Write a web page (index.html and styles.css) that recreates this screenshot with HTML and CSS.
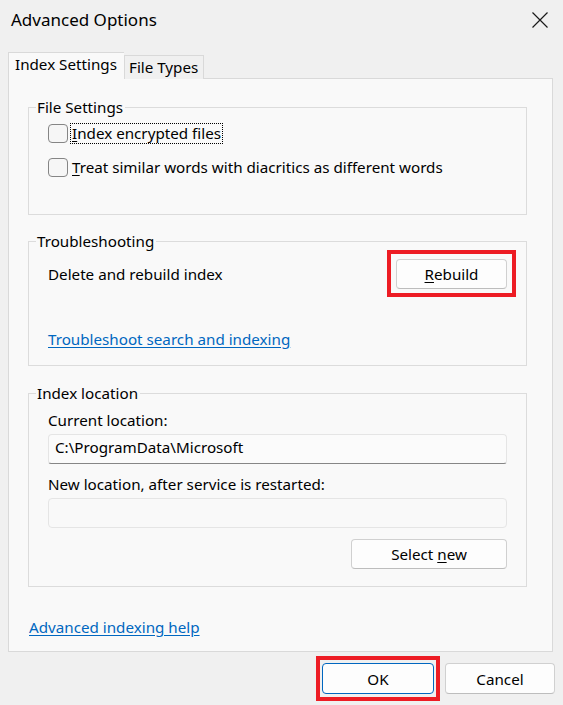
FILE: index.html
```html
<!DOCTYPE html>
<html lang="en">
<head>
<meta charset="utf-8">
<title>Advanced Options</title>
<link rel="stylesheet" href="styles.css">
</head>
<body>
<div class="window">
  <header class="titlebar">
    <span class="title">Advanced Options</span>
    <span class="close" aria-label="Close">
      <svg width="16" height="16" viewBox="0 0 16 16"><path d="M0.5 0.5 L15.5 15.5 M15.5 0.5 L0.5 15.5" stroke="#1a1a1a" stroke-width="1.2" fill="none"/></svg>
    </span>
  </header>

  <nav class="tabs">
    <div class="tab active">Index Settings</div>
    <div class="tab">File Types</div>
  </nav>

  <main class="panel">
    <fieldset class="group group-files">
      <legend>File Settings</legend>
      <label class="check">
        <span class="box"></span>
        <span class="focus"><u>I</u>ndex encrypted files</span>
      </label>
      <label class="check">
        <span class="box"></span>
        <span><u>T</u>reat similar words with diacritics as different words</span>
      </label>
    </fieldset>

    <fieldset class="group group-trouble">
      <legend>Troubleshooting</legend>
      <div class="row">
        <span>Delete and rebuild index</span>
        <span class="btn rebuild marked"><span><u>R</u>ebuild</span></span>
      </div>
      <a class="link trouble-link" href="#">Troubleshoot search and indexing</a>
    </fieldset>

    <fieldset class="group group-location">
      <legend>Index location</legend>
      <div class="field-label">Current location:</div>
      <div class="input current">C:\ProgramData\Microsoft</div>
      <div class="field-label new-label">New location, after service is restarted:</div>
      <div class="input disabled"></div>
      <div class="actions">
        <span class="btn select-new"><span>Select <u>n</u>ew</span></span>
      </div>
    </fieldset>

    <a class="link help-link" href="#">Advanced indexing help</a>
  </main>

  <footer class="footer">
    <span class="btn ok default marked-ok">OK</span>
    <span class="btn cancel">Cancel</span>
  </footer>
</div>
</body>
</html>
```

FILE: styles.css
```css
* { box-sizing: border-box; }

html, body {
  margin: 0;
  padding: 0;
  background: #f0f0f0;
}

body {
  font-family: "Noto Sans", "Open Sans", sans-serif;
  font-size: 15.2px;
  color: #000;
}

.window {
  width: 563px;
  height: 705px;
  background: #f0f0f0;
  border-radius: 8px;
  overflow: hidden;
}

.titlebar {
  height: 40px;
  display: flex;
  align-items: center;
  justify-content: space-between;
  padding: 0 15px 0 11px;
}

.title {
  font-size: 17px;
  line-height: 20px;
}

.close {
  display: flex;
  width: 16px;
  height: 16px;
}

.tabs {
  display: flex;
  align-items: flex-end;
  margin: 12px 0 0 8px;
  height: 27px;
  position: relative;
  z-index: 1;
}

.tab {
  height: 24px;
  line-height: 23px;
  padding: 0 4px;
  border: 1px solid #d9d9d9;
  border-bottom: none;
  background: #f0f0f0;
  width: 80px;
  white-space: nowrap;
}

.tab.active {
  height: 27px;
  width: 116px;
  padding: 0 6px;
  line-height: 23px;
  background: #f9f9f9;
  border-right: none;
}

.panel {
  margin: -1px 10px 0 8px;
  border: 1px solid #d9d9d9;
  background: #f9f9f9;
  padding: 18px 25px 14px 19px;
  display: flex;
  flex-direction: column;
}

.group {
  margin: 0;
  padding: 0 19px 0 19px;
  border: 1px solid #dcdcdc;
  min-width: 0;
}

.group legend {
  line-height: 20px;
  padding: 0 2px 0 1px;
  margin-left: -12px;
}

.group-files {
  padding-top: 4px;
  padding-bottom: 35px;
  display: flex;
  flex-direction: column;
  gap: 10px;
}

.check {
  display: flex;
  align-items: center;
  height: 24px;
  gap: 4px;
}

.box {
  width: 20px;
  height: 19px;
  border: 1px solid #858585;
  border-radius: 4px;
  background: #f6f6f6;
  flex: none;
}

.focus {
  outline: 1px dotted #000;
  outline-offset: 0;
  line-height: 19px;
  padding: 0 1px;
  margin-left: -1px;
}

u { text-decoration-thickness: 1px; text-underline-offset: 2px; }

.group-trouble {
  margin-top: 16px;
  padding-top: 8px;
  padding-bottom: 16px;
}

.row {
  display: flex;
  align-items: center;
  justify-content: space-between;
}

.link {
  color: #0067c0;
  text-decoration: underline;
  text-underline-offset: 2px;
  line-height: 20px;
  align-self: flex-start;
}

.trouble-link {
  display: inline-block;
  margin-top: 40px;
}

.btn {
  display: inline-flex;
  align-items: center;
  justify-content: center;
  height: 30px;
  background: #fdfdfd;
  border: 1px solid #d0d0d0;
  border-bottom-color: #bdbdbd;
  border-radius: 4px;
  position: relative;
}

.rebuild { width: 111px; }

.marked::after,
.marked-ok::after {
  content: "";
  position: absolute;
  border: 4px solid #ed1c24;
  pointer-events: none;
}

.marked::after { inset: -10px -10px -9px -10px; }

.marked-ok::after { inset: -8px -7px -8px -7px; }

.group-location {
  margin-top: 17px;
  padding-top: 7px;
  padding-bottom: 17px;
}

.field-label { line-height: 20px; }

.input {
  height: 30px;
  margin-top: 4px;
  border: 1px solid #e5e5e5;
  border-radius: 4px;
  background: #fbfbfb;
  line-height: 25px;
  padding: 0 6px;
}

.input.current {
  border-bottom: 1px solid #868686;
  border-bottom-left-radius: 3px;
  border-bottom-right-radius: 3px;
}

.input.disabled { background: #f9f9f9; }

.new-label { margin-top: 10px; }

.actions {
  display: flex;
  justify-content: flex-end;
  margin-top: 11px;
}

.select-new { width: 156px; }

.help-link {
  margin-top: 30px;
  margin-left: 1px;
}

.footer {
  display: flex;
  justify-content: flex-end;
  gap: 11px;
  padding: 11px 8px 0 0;
}

.ok {
  width: 112px;
  height: 31px;
  border-color: #0067c0;
}

.cancel {
  width: 110px;
  height: 31px;
}
```
